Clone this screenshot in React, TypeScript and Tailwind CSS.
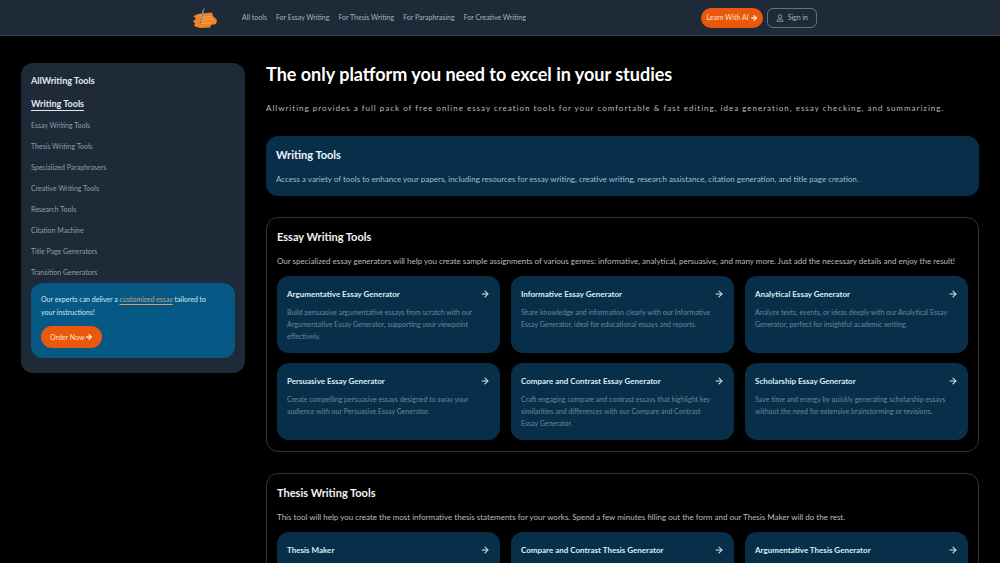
import { ArrowRight } from 'lucide-react';

const navLinks = ['All tools', 'For Essay Writing', 'For Thesis Writing', 'For Paraphrasing', 'For Creative Writing'];

const sideLinks = [
  'Essay Writing Tools',
  'Thesis Writing Tools',
  'Specialized Paraphrasers',
  'Creative Writing Tools',
  'Research Tools',
  'Citation Machine',
  'Title Page Generators',
  'Transition Generators',
];

type Tool = { title: string; text?: string };

const essayTools: Tool[] = [
  {
    title: 'Argumentative Essay Generator',
    text: 'Build persuasive argumentative essays from scratch with our Argumentative Essay Generator, supporting your viewpoint effectively.',
  },
  {
    title: 'Informative Essay Generator',
    text: 'Share knowledge and information clearly with our Informative Essay Generator, ideal for educational essays and reports.',
  },
  {
    title: 'Analytical Essay Generator',
    text: 'Analyze texts, events, or ideas deeply with our Analytical Essay Generator, perfect for insightful academic writing.',
  },
  {
    title: 'Persuasive Essay Generator',
    text: 'Create compelling persuasive essays designed to sway your audience with our Persuasive Essay Generator.',
  },
  {
    title: 'Compare and Contrast Essay Generator',
    text: 'Craft engaging compare and contrast essays that highlight key similarities and differences with our Compare and Contrast Essay Generator.',
  },
  {
    title: 'Scholarship Essay Generator',
    text: 'Save time and energy by quickly generating scholarship essays without the need for extensive brainstorming or revisions.',
  },
];

const thesisTools: Tool[] = [
  { title: 'Thesis Maker' },
  { title: 'Compare and Contrast Thesis Generator' },
  { title: 'Argumentative Thesis Generator' },
];

function Logo() {
  return (
    <svg viewBox="0 0 26 22" className="h-[22px] w-[26px]" aria-label="AllWriting">
      <path d="M6 7 20 5.500 21 9 25 13 24 17 19 18 18 20.500 8 21 2 19 3 16.500 1 14 4 12 1.500 9Z" fill="#f58220" />
      <path d="M10 10.500 19 9.500M8 13.500 21 12M9 16.500 20 15.500" stroke="#ffb467" strokeWidth="0.800" />
      <path d="M12.500 0.500 10.500 11 8 17 8.500 10 11 3Z" fill="#9fb4c8" />
      <path d="M11.800 3 8 17.500" stroke="#33414f" strokeWidth="0.500" />
    </svg>
  );
}

function Header() {
  return (
    <header className="border-b border-[#3a444f] bg-[#1e2a37]">
      <div className="mx-auto flex h-[35px] w-[63.4%] items-center">
        <a href="#home" className="mr-6 ml-[9px] shrink-0">
          <Logo />
        </a>
        <nav className="flex gap-[9px] text-[7px] whitespace-nowrap text-[#a9b3be]">
          {navLinks.map((label) => (
            <a key={label} href="#tools">{label}</a>
          ))}
        </nav>
        <div className="ml-auto flex gap-1 text-[7px] whitespace-nowrap">
          <button className="flex h-5 items-center gap-px rounded-full bg-[#ea580c] px-[5px] text-[#ffe3cf]">
            Learn With AI <ArrowRight size={8} strokeWidth={4} />
          </button>
          <button className="flex h-5 items-center gap-1 rounded-md border border-[#66717d] px-2 text-[#a9b3be]">
            <svg viewBox="0 0 16 16" className="size-2" fill="none" stroke="currentColor" strokeWidth="1.500">
              <circle cx="8" cy="5" r="3.500" />
              <path d="M2 14.500c0-3 2-4.500 6-4.500s6 1.500 6 4.500z" />
            </svg>
            Sign in
          </button>
        </div>
      </div>
    </header>
  );
}

function Sidebar() {
  return (
    <aside className="w-56 shrink-0 rounded-xl bg-[#1e2a37] px-[10px] pt-[10px] pb-[15px]">
      <h2 className="text-[9px] leading-4 font-bold text-[#e2e8f0]">AllWriting Tools</h2>
      <a href="#writing" className="mt-2 block w-fit border-b border-[#e2e8f0] text-[9px] leading-[13px] font-bold text-[#e2e8f0]">
        Writing Tools
      </a>
      <ul className="mt-1 text-[7px] leading-[21px] text-[#929da9]">
        {sideLinks.map((label) => (
          <li key={label}>
            <a href="#tools">{label}</a>
          </li>
        ))}
      </ul>
      <div className="rounded-xl bg-[#075985] p-[10px]">
        <p className="pr-3 text-[7px] leading-[13px] text-[#d5e6f1]">
          Our experts can deliver a{' '}
          <a href="#order" className="text-[#c9a27c] underline underline-offset-2">customized essay</a> tailored to your
          instructions!
        </p>
        <button className="mt-[7px] flex h-[22px] items-center gap-px rounded-full bg-[#ea580c] px-[9px] text-[7px] text-[#ffe3cf]">
          Order Now <ArrowRight size={8} strokeWidth={4} />
        </button>
      </div>
    </aside>
  );
}

function ToolCard({ title, text }: Tool) {
  return (
    <a href="#tool" className="block min-h-[77px] rounded-xl bg-[#082f49] px-[10px] pt-[10px] pb-[11px]">
      <div className="flex items-center justify-between">
        <h3 className="text-[8px] leading-4 font-bold whitespace-nowrap text-[#d9ecf8]">{title}</h3>
        <ArrowRight size={10} strokeWidth={2.5} className="text-[#d9ecf8]" />
      </div>
      {text && <p className="mt-1 pr-2 text-[7px] leading-3 text-[#67879e]">{text}</p>}
    </a>
  );
}

function ToolSection({ title, intro, tools }: { title: string; intro: string; tools: Tool[] }) {
  return (
    <section className="mt-[21px] rounded-xl border border-[#333] px-[10px] pt-[10px] pb-[11px]">
      <h2 className="text-[11px] leading-[18px] font-bold text-[#f1f5f9]">{title}</h2>
      <p className="mt-[7px] text-[8px] leading-4 text-[#bcbcbc]">{intro}</p>
      <div className="mt-[7px] grid grid-cols-3 gap-x-[11px] gap-y-[10px]">
        {tools.map((tool) => (
          <ToolCard key={tool.title} {...tool} />
        ))}
      </div>
    </section>
  );
}

export default function App() {
  return (
    <div className="h-screen overflow-hidden bg-black font-['Lato',sans-serif]">
      <Header />
      <div className="flex items-start gap-[21px] px-[21px] pt-[27px]">
        <Sidebar />
        <main className="min-w-0 flex-1">
          <h1 className="text-[18px] leading-[23px] font-bold text-white">The only platform you need to excel in your studies</h1>
          <p className="mt-[14px] text-[8px] leading-4 tracking-[1px] text-[#bcbcbc]">
            Allwriting provides a full pack of free online essay creation tools for your comfortable &amp; fast editing,
            idea generation, essay checking, and summarizing.
          </p>
          <section className="mt-5 rounded-xl bg-[#082f49] px-[10px] pt-[10px] pb-[9px]">
            <h2 className="text-[11px] leading-[18px] font-bold text-[#f1f5f9]">Writing Tools</h2>
            <p className="mt-[7px] text-[8px] leading-4 text-[#a3bccd]">
              Access a variety of tools to enhance your papers, including resources for essay writing, creative writing,
              research assistance, citation generation, and title page creation.
            </p>
          </section>
          <ToolSection
            title="Essay Writing Tools"
            intro="Our specialized essay generators will help you create sample assignments of various genres: informative, analytical, persuasive, and many more. Just add the necessary details and enjoy the result!"
            tools={essayTools}
          />
          <ToolSection
            title="Thesis Writing Tools"
            intro="This tool will help you create the most informative thesis statements for your works. Spend a few minutes filling out the form and our Thesis Maker will do the rest."
            tools={thesisTools}
          />
        </main>
      </div>
    </div>
  );
}
